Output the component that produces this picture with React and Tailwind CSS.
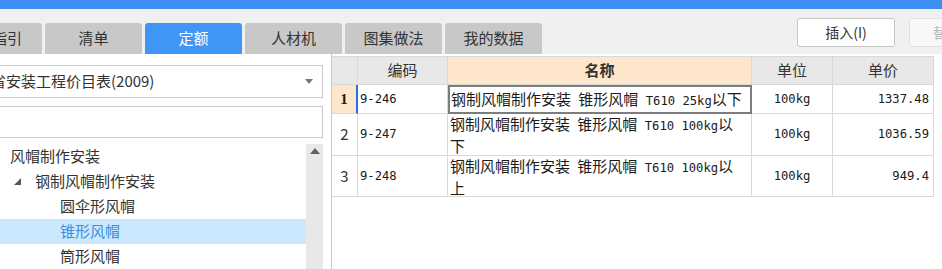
import React from 'react';

const tabs = ['清单', '定额', '人材机', '图集做法', '我的数据'];

const rows = [
  { no: '1', code: '9-246', name: '钢制风帽制作安装 锥形风帽 T610 25kg以下', unit: '100kg', price: '1337.48', h: 'h-[29px]', active: true },
  { no: '2', code: '9-247', name: '钢制风帽制作安装 锥形风帽 T610 100kg以下', unit: '100kg', price: '1036.59', h: 'h-[42px]' },
  { no: '3', code: '9-248', name: '钢制风帽制作安装 锥形风帽 T610 100kg以上', unit: '100kg', price: '949.4', h: 'h-[41px]' },
];

// half-width latin runs look like SimSun ascii: narrow monospace
const Mixed = ({ text }) =>
  text.split(/([\x20-\x7e]+)/).map((part, i) =>
    /[\x20-\x7e]/.test(part) ? (
      <span key={i} className="font-['DejaVu_Sans_Mono',monospace] text-[12.2px]">
        {part}
      </span>
    ) : (
      part
    )
  );

const cell = 'border-r border-b border-[#d9d9d9] flex items-center';

const App = () => {
  return (
    <div className="w-[942px] h-[269px] overflow-hidden flex flex-col bg-white font-['Noto_Sans_CJK_SC',sans-serif] text-[#333]">
      {/* top bar */}
      <div className="h-[9px] bg-[#3d8ef0] shrink-0" />

      {/* tab row + toolbar */}
      <div className="h-[45px] shrink-0 bg-[#f0f0f0] flex overflow-hidden">
        <div className="flex items-end gap-[3px] shrink-0">
          <div className="w-[42px] h-[31px] bg-[#c8c8c8] rounded-tr-[3px] flex items-center justify-end pr-[20px] text-[15px] whitespace-nowrap overflow-hidden">
            指引
          </div>
          {tabs.map((t) => (
            <div
              key={t}
              className={
                t === '定额'
                  ? 'w-[97px] h-[31px] rounded-t-[3px] bg-[#4096f5] text-white flex items-center justify-center text-[15px]'
                  : 'w-[97px] h-[31px] rounded-t-[3px] bg-[#c8c8c8] flex items-center justify-center text-[15px]'
              }
            >
              {t}
            </div>
          ))}
        </div>
        <div className="ml-[255px] pt-[9px] flex gap-[14px] shrink-0">
          <div className="w-[98px] h-[29px] bg-white border border-[#c6c6c6] rounded-[3px] flex items-center justify-center text-[14px] text-[#333]">
            插入(I)
          </div>
          <div className="w-[98px] h-[29px] bg-[#f8f8f8] border border-[#e0e0e0] rounded-[3px] flex items-center pl-[23px] text-[14px] text-[#b8b8b8] whitespace-nowrap">
            替换(R)
          </div>
        </div>
      </div>

      {/* content */}
      <div className="flex-1 flex min-h-0">
        {/* left panel */}
        <div className="w-[323px] shrink-0 flex flex-col">
          <div className="mt-[11px] h-[33px] border-y border-r border-[#c8c8c8] flex items-center overflow-hidden">
            <span className="ml-[-9px] text-[15px] whitespace-nowrap">省安装工程价目表(2009)</span>
            <svg className="ml-auto mr-[9px]" width="8" height="5" viewBox="0 0 8 5">
              <polygon points="0,0 8,0 4,5" fill="#777" />
            </svg>
          </div>
          <div className="mt-[8px] h-[32px] border-y border-r border-[#c8c8c8] bg-white" />
          <div className="mt-[6px] flex-1 flex min-h-0">
            <div className="flex-1 flex flex-col text-[15px]">
              <div className="h-[25px] flex items-center pl-[10px]">风帽制作安装</div>
              <div className="h-[25px] flex items-center pl-[14px]">
                <svg width="7" height="7" viewBox="0 0 7 7">
                  <polygon points="7,0 7,7 0,7" fill="#5a5a5a" />
                </svg>
                <span className="ml-[14px]">钢制风帽制作安装</span>
              </div>
              <div className="h-[25px] flex items-center pl-[60px]">圆伞形风帽</div>
              <div className="h-[25px] flex items-center pl-[60px] bg-[#cce8ff] text-[#3b8de0]">锥形风帽</div>
              <div className="h-[25px] flex items-center pl-[60px]">筒形风帽</div>
            </div>
            <div className="w-[17px] bg-[#e8e8e8] flex justify-center pt-[4px]">
              <svg width="10" height="6" viewBox="0 0 10 6">
                <polygon points="5,0 10,6 0,6" fill="#606060" />
              </svg>
            </div>
          </div>
        </div>

        <div className="w-[8px] shrink-0" />

        {/* right panel: grid */}
        <div className="flex-1 border-l border-[#c8c8c8] pt-[2px]">
          <div className="w-[602px] border-t border-[#d9d9d9] grid grid-cols-[26px_90px_304px_81px_101px] text-[#1a1a1a]">
            {/* header */}
            <div className={`${cell} h-[28px] bg-[#e8e8e8]`} />
            <div className={`${cell} h-[28px] bg-[#e8e8e8] justify-center text-[15px] text-[#333]`}>编码</div>
            <div className={`${cell} h-[28px] bg-[#fde6c9] justify-center text-[15px] font-bold text-[#333]`}>名称</div>
            <div className={`${cell} h-[28px] bg-[#e8e8e8] justify-center text-[15px] text-[#333]`}>单位</div>
            <div className={`${cell} h-[28px] bg-[#e8e8e8] justify-center text-[15px] text-[#333]`}>单价</div>

            {rows.map((r) => (
              <React.Fragment key={r.no}>
                <div
                  className={
                    r.active
                      ? `border-b border-[#d9d9d9] border-r-2 border-r-[#1a73e8] flex items-center ${r.h} bg-[#fde6c9] justify-center font-['Liberation_Serif',serif] font-bold text-[15px]`
                      : `${cell} ${r.h} justify-center text-[15px] text-[#333]`
                  }
                >
                  {r.no}
                </div>
                <div className={`${cell} ${r.h} pl-[2px]`}>
                  <span className="font-['DejaVu_Sans_Mono',monospace] text-[12.2px]">{r.code}</span>
                </div>
                <div
                  className={
                    r.active
                      ? `${r.h} border-2 border-[#7d7d7d] flex items-center pl-[1px] text-[15px] leading-[19px] whitespace-nowrap`
                      : `${cell} ${r.h} pl-[2px] pr-[6px] text-[15px] leading-[19px] break-all`
                  }
                >
                  <div>
                    <Mixed text={r.name} />
                  </div>
                </div>
                <div className={`${cell} ${r.h} justify-center`}>
                  <span className="font-['DejaVu_Sans_Mono',monospace] text-[12.2px]">{r.unit}</span>
                </div>
                <div className={`${cell} ${r.h} justify-end pr-[4px]`}>
                  <span className="font-['DejaVu_Sans_Mono',monospace] text-[12.2px]">{r.price}</span>
                </div>
              </React.Fragment>
            ))}
          </div>
        </div>
      </div>
    </div>
  );
};

export default App;
